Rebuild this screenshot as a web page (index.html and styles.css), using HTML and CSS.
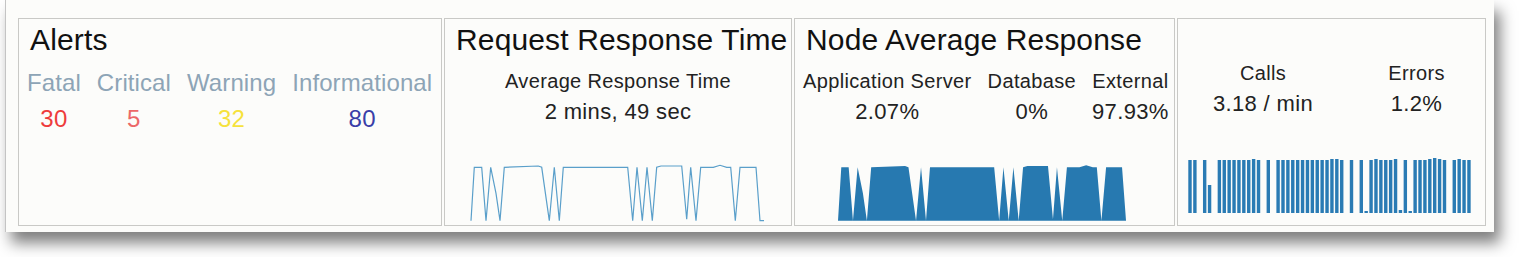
FILE: index.html
```html
<!DOCTYPE html>
<html lang="en">
<head>
    <meta charset="UTF-8">
    <meta name="viewport" content="width=device-width, initial-scale=1.0">
    <title>Application Dashboard</title>
    <link rel="stylesheet" href="styles.css">
</head>
<body>
    <div class="frame">
        <div class="row">
            <div class="panel panel-alerts">
                <h2 class="title">Alerts</h2>
                <div class="alert-cols">
                    <div class="alert-col">
                        <div class="alert-label">Fatal</div>
                        <div class="alert-value fatal">30</div>
                    </div>
                    <div class="alert-col">
                        <div class="alert-label">Critical</div>
                        <div class="alert-value critical">5</div>
                    </div>
                    <div class="alert-col">
                        <div class="alert-label">Warning</div>
                        <div class="alert-value warning">32</div>
                    </div>
                    <div class="alert-col">
                        <div class="alert-label">Informational</div>
                        <div class="alert-value info">80</div>
                    </div>
                </div>
            </div>

            <div class="panel panel-response">
                <h2 class="title">Request Response Time</h2>
                <div class="stat-center">
                    <div class="stat-label">Average Response Time</div>
                    <div class="stat-value">2 mins, 49 sec</div>
                </div>
                <svg id="lineChart" class="chart chart-line" viewBox="0 0 296 58"></svg>
            </div>

            <div class="panel panel-node">
                <h2 class="title">Node Average Response</h2>
                <div class="node-cols">
                    <div class="node-col">
                        <div class="stat-label">Application Server</div>
                        <div class="stat-value">2.07%</div>
                    </div>
                    <div class="node-col">
                        <div class="stat-label">Database</div>
                        <div class="stat-value">0%</div>
                    </div>
                    <div class="node-col">
                        <div class="stat-label">External</div>
                        <div class="stat-value">97.93%</div>
                    </div>
                </div>
                <svg id="areaChart" class="chart chart-area" viewBox="0 0 296 58" preserveAspectRatio="none"></svg>
            </div>

            <div class="panel panel-calls">
                <div class="calls-cols">
                    <div class="calls-col">
                        <div class="stat-label">Calls</div>
                        <div class="stat-value">3.18 / min</div>
                    </div>
                    <div class="calls-col">
                        <div class="stat-label">Errors</div>
                        <div class="stat-value">1.2%</div>
                    </div>
                </div>
                <svg id="barChart" class="chart chart-bars" viewBox="0 0 288 56"></svg>
            </div>
        </div>
    </div>

    <script>
        const NS = 'http://www.w3.org/2000/svg';

        // response time samples (x, y inside a 296 x 58 box)
        const samples = [
            [1, 56.7], [4.3, 3.3], [11.7, 3.3], [16, 56.7], [20.7, 3.3], [26, 29.3], [30, 56.7],
            [34.3, 3.3], [68.3, 2], [71.7, 3.3], [79.3, 56.7], [84.3, 3.3], [89.3, 56.7], [93.3, 3.3],
            [157.7, 3.3], [162.7, 56.7], [167, 3.3], [172.3, 56.7], [177, 3.3], [182.3, 56.7],
            [186.7, 3.3], [191, 2], [211.7, 2], [216.7, 55.3], [220.7, 3.3], [226, 56.7], [230.7, 3.3],
            [243.3, 3.3], [250, 1.3], [256.7, 3.3], [260.7, 3.3], [265.3, 56.7], [270, 3.3],
            [286, 3.3], [290, 56.7], [294, 56.7]
        ];
        const pts = samples.map(p => p.join(',')).join(' ');

        const line = document.createElementNS(NS, 'polyline');
        line.setAttribute('points', pts);
        line.setAttribute('class', 'line');
        document.getElementById('lineChart').appendChild(line);

        const area = document.createElementNS(NS, 'polygon');
        area.setAttribute('points', '1,56.7 ' + pts + ' 294,56.7');
        area.setAttribute('class', 'area');
        document.getElementById('areaChart').appendChild(area);

        // calls per interval, 0 = no calls
        const calls = [
            53, 53, 0, 53, 28, 0, 53, 53, 53, 53, 53, 53, 53, 54, 53, 0, 53, 0, 53, 53,
            53, 53, 53, 53, 53, 53, 53, 53, 53, 54, 54, 53, 0, 53, 0, 53, 2, 53, 54, 53,
            53, 53, 54, 3, 53, 2, 53, 53, 53, 54, 55, 54, 53, 0, 53, 54, 53, 53
        ];
        const bars = document.getElementById('barChart');
        calls.forEach((h, i) => {
            if (h === 0) return;
            const r = document.createElementNS(NS, 'rect');
            r.setAttribute('x', (1.3 + i * 4.894).toFixed(2));
            r.setAttribute('y', 55 - h);
            r.setAttribute('width', 3.4);
            r.setAttribute('height', h);
            r.setAttribute('class', 'bar');
            bars.appendChild(r);
        });
    </script>
</body>
</html>
```

FILE: styles.css
```css
html, body {
    margin: 0;
    background: #fff;
}

body {
    min-height: 257px;
    font-family: "Liberation Sans", Arial, sans-serif;
    color: #222;
}

.frame {
    box-sizing: border-box;
    width: 1489px;
    height: 232px;
    margin-left: 5px;
    padding: 18px 0 0 12px;
    background: #fcfcfa;
    border-left: 1px solid #c4c4c4;
    box-shadow: 6px 11px 14px rgba(0, 0, 0, 0.5);
}

.row {
    display: flex;
    gap: 2px;
}

.panel {
    box-sizing: border-box;
    height: 208px;
    border: 1px solid #c9c9c6;
    background: #fcfcfa;
    display: flex;
    flex-direction: column;
}

.panel-alerts { width: 424px; }
.panel-response { width: 348px; }
.panel-node { width: 381px; }
.panel-calls { width: 309px; }

.title {
    margin: 0;
    padding: 3px 10px 0 11px;
    font-size: 30px;
    font-weight: normal;
    line-height: 36px;
    letter-spacing: 0.14px;
    color: #111;
    white-space: nowrap;
}

/* alerts */
.alert-cols {
    display: flex;
    margin-top: 11px;
}

.alert-col {
    padding: 0 8px;
    text-align: center;
}

.alert-label {
    font-size: 24px;
    line-height: 28px;
    letter-spacing: 0.1px;
    color: #8da4b6;
}

.alert-value {
    margin-top: 8px;
    font-size: 24px;
    line-height: 28px;
    letter-spacing: 0.3px;
}

.fatal { color: #ee3c3c; }
.critical { color: #ec6868; }
.warning { color: #f6e23c; }
.info { color: #3a3ea8; }

/* stats */
.stat-label {
    font-size: 20px;
    line-height: 24px;
    letter-spacing: 0.35px;
    white-space: nowrap;
}

.stat-value {
    margin-top: 6px;
    font-size: 22px;
    line-height: 26px;
    letter-spacing: 0.35px;
    white-space: nowrap;
}

.stat-center {
    margin-top: 11px;
    text-align: center;
}

.node-cols {
    display: flex;
    margin-top: 11px;
}

.node-col {
    padding: 0 8px;
    text-align: center;
}

.calls-cols {
    display: grid;
    grid-template-columns: 170px 1fr;
    margin-top: 42px;
    text-align: center;
}

/* charts */
.chart {
    display: block;
    margin-top: auto;
}

.chart-line {
    width: 296px;
    height: 58px;
    margin-left: 25px;
    margin-bottom: 3px;
}

.chart-area {
    width: 295px;
    height: 58px;
    margin-left: 42px;
    margin-bottom: 3px;
}

.chart-bars {
    width: 288px;
    height: 56px;
    margin-left: 9px;
    margin-bottom: 11px;
}

.line {
    fill: none;
    stroke: #5a9fca;
    stroke-width: 1.2;
}

.area {
    fill: #2779b0;
}

.bar {
    fill: #2a7bb4;
}
```
